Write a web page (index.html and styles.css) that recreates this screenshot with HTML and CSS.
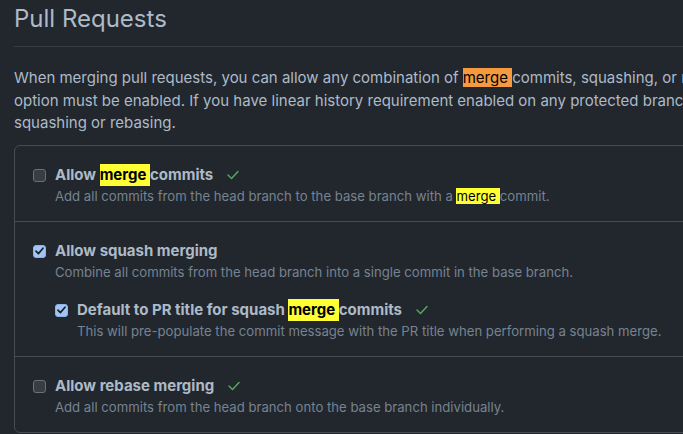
FILE: index.html
```html
<!DOCTYPE html>
<html lang="en">
<head>
<meta charset="utf-8">
<title>Pull Requests</title>
<link rel="stylesheet" href="styles.css">
</head>
<body>
<main class="page">
  <h2 class="heading">Pull Requests</h2>
  <p class="intro">When merging pull requests, you can allow any combination of <mark class="hl hl-active">merge </mark>commits, squashing, or rebasing. At least one option must be enabled. If you have linear history requirement enabled on any protected branch, you must enable squashing or rebasing.</p>
  <div class="box">
    <div class="row">
      <div class="opt">
        <span class="cb"></span>
        <div class="opt-body">
          <div class="label">Allow <mark class="hl">merge </mark>commits <svg class="ok" width="12" height="10" viewBox="0 0 12 10"><polyline points="1,5 4.5,8.5 11,1.5" fill="none" stroke="#57ab5a" stroke-width="1.4" stroke-linecap="round" stroke-linejoin="round"/></svg></div>
          <div class="desc">Add all commits from the head branch to the base branch with a <mark class="hl">merge </mark>commit.</div>
        </div>
      </div>
    </div>
    <div class="row">
      <div class="opt">
        <span class="cb cb-on"><svg width="9" height="8" viewBox="0 0 9 8"><polyline points="1,4.2 3.4,6.6 8,1.2" fill="none" stroke="#1c2128" stroke-width="1.7" stroke-linecap="round" stroke-linejoin="round"/></svg></span>
        <div class="opt-body">
          <div class="label">Allow squash merging</div>
          <div class="desc">Combine all commits from the head branch into a single commit in the base branch.</div>
          <div class="opt sub">
            <span class="cb cb-on"><svg width="9" height="8" viewBox="0 0 9 8"><polyline points="1,4.2 3.4,6.6 8,1.2" fill="none" stroke="#1c2128" stroke-width="1.7" stroke-linecap="round" stroke-linejoin="round"/></svg></span>
            <div class="opt-body">
              <div class="label">Default to PR title for squash <mark class="hl">merge </mark>commits <svg class="ok" width="12" height="10" viewBox="0 0 12 10"><polyline points="1,5 4.5,8.5 11,1.5" fill="none" stroke="#57ab5a" stroke-width="1.4" stroke-linecap="round" stroke-linejoin="round"/></svg></div>
              <div class="desc">This will pre-populate the commit message with the PR title when performing a squash merge.</div>
            </div>
          </div>
        </div>
      </div>
    </div>
    <div class="row">
      <div class="opt">
        <span class="cb"></span>
        <div class="opt-body">
          <div class="label">Allow rebase merging <svg class="ok" width="12" height="10" viewBox="0 0 12 10"><polyline points="1,5 4.5,8.5 11,1.5" fill="none" stroke="#57ab5a" stroke-width="1.4" stroke-linecap="round" stroke-linejoin="round"/></svg></div>
          <div class="desc">Add all commits from the head branch onto the base branch individually.</div>
        </div>
      </div>
    </div>
  </div>
</main>
</body>
</html>
```

FILE: styles.css
```css
html, body {
  margin: 0;
  padding: 0;
  background: #22272e;
  overflow: hidden;
  height: 100%;
}

body {
  font-family: Inter, "Liberation Sans", sans-serif;
  color: #adbac7;
}

.page {
  width: 850px;
  padding: 4px 0 0 14px;
}

.heading {
  margin: 0;
  font-size: 24px;
  font-weight: 400;
  line-height: 30px;
  padding-bottom: 12px;
  border-bottom: 1px solid #373e47;
}

.intro {
  margin: 20px 0 10px;
  font-size: 15px;
  line-height: 22.5px;
}

.hl {
  background: #ffff33;
  color: #000;
}

.hl-active {
  background: #f59a3f;
}

.box {
  border: 1px solid #444c56;
  border-radius: 6px;
}

.row {
  padding: 18px 18px 15px;
}

.row + .row {
  border-top: 1px solid #444c56;
}

.opt {
  display: flex;
  align-items: flex-start;
  gap: 9px;
}

.sub {
  margin-top: 17px;
}

.cb {
  flex: none;
  box-sizing: border-box;
  width: 13px;
  height: 13px;
  margin-top: 5px;
  border: 1px solid #6e7076;
  border-radius: 3px;
  background: #393c42;
  display: flex;
  align-items: center;
  justify-content: center;
}

.cb-on {
  background: #a2c5f7;
  border-color: #8eb3e8;
}

.label {
  font-size: 15px;
  font-weight: 700;
  line-height: 22px;
  display: flex;
  align-items: center;
  white-space: pre;
}

.ok {
  margin-left: 10px;
}

.desc {
  font-size: 13.15px;
  line-height: 20px;
  color: #768390;
}
```
